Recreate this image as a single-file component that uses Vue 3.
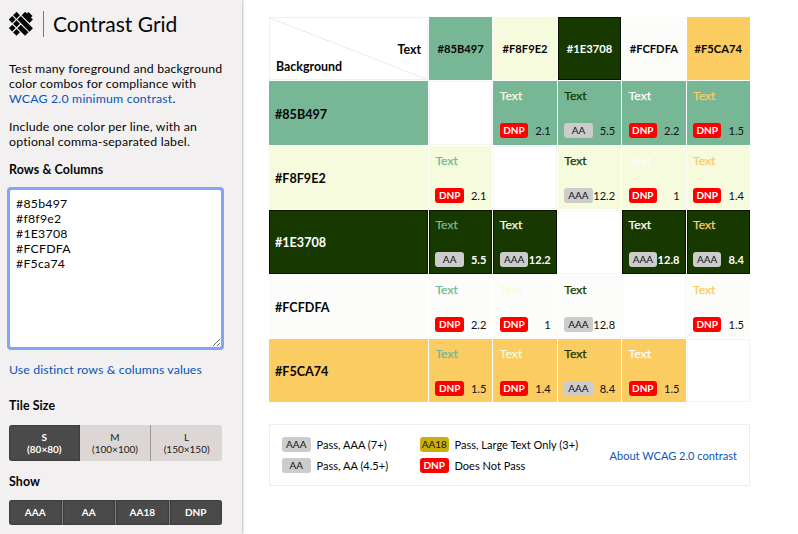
<script setup>
import { ref } from 'vue'

const source = ref('#85b497\n#f8f9e2\n#1E3708\n#FCFDFA\n#F5ca74')
const colors = [
  { name: '#85B497', cls: 'green' },
  { name: '#F8F9E2', cls: 'cream' },
  { name: '#1E3708', cls: 'forest' },
  { name: '#FCFDFA', cls: 'white' },
  { name: '#F5CA74', cls: 'yellow' },
]
const ratios = [
  [null, 2.1, 5.5, 2.2, 1.5],
  [2.1, null, 12.2, 1, 1.4],
  [5.5, 12.2, null, 12.8, 8.4],
  [2.2, 1, 12.8, null, 1.5],
  [1.5, 1.4, 8.4, 1.5, null],
]
const grade = (r) => (r >= 7 ? 'AAA' : r >= 4.5 ? 'AA' : r >= 3 ? 'AA18' : 'DNP')
const sizes = [['S', '80×80'], ['M', '100×100'], ['L', '150×150']]
const levels = ['AAA', 'AA', 'AA18', 'DNP']
const legend = [
  ['AAA', 'Pass, AAA (7+)'],
  ['AA18', 'Pass, Large Text Only (3+)'],
  ['AA', 'Pass, AA (4.5+)'],
  ['DNP', 'Does Not Pass'],
]
</script>

<template>
  <div class="app">
    <aside class="sidebar">
      <header class="brand">
        <svg class="logo" width="24" height="24" viewBox="0 0 24 24">
          <g fill="none" stroke="#050505" stroke-width="4.9">
            <path d="M5.8 1.5L9.2 4.9M1.5 5.8L4.9 9.2M5.8 10.1L9.2 13.5M1.5 14.4L4.9 17.8M5.8 18.7L9.2 22.1" />
            <path d="M14.4 1.5L22.2 9.3M10.1 5.8L22.2 17.9M10.1 14.4L17.8 22.1" />
          </g>
          <path d="M18.6 .9L22.6 4.9" stroke="#050505" stroke-width="2.6" />
        </svg>
        <h1>Contrast Grid</h1>
      </header>
      <p>Test many foreground and background<br />color combos for compliance with<br /><a>WCAG 2.0 minimum contrast</a>.</p>
      <p class="hint">Include one color per line, with an<br />optional comma-separated label.</p>
      <h2 class="rows-title">Rows &amp; Columns</h2>
      <textarea v-model="source" spellcheck="false"></textarea>
      <a class="distinct">Use distinct rows &amp; columns values</a>
      <h2 class="size-title">Tile Size</h2>
      <div class="segments sizes">
        <button v-for="([s, d], i) in sizes" :key="s" :class="{ active: i === 0 }">{{ s }}<br />({{ d }})</button>
      </div>
      <h2 class="show-title">Show</h2>
      <div class="segments levels">
        <button v-for="l in levels" :key="l" class="active">{{ l }}</button>
      </div>
    </aside>

    <main>
      <div class="grid">
        <div class="corner">
          <svg viewBox="0 0 159 63" preserveAspectRatio="none"><path d="M0 0L159 63" stroke="#eaeaea" fill="none" /></svg>
          <span class="axis-text">Text</span>
          <span class="axis-bg">Background</span>
        </div>
        <div v-for="c in colors" :key="c.name" class="column-key" :class="'bg-' + c.cls"><span>{{ c.name }}</span></div>
        <template v-for="(row, i) in colors" :key="row.name">
          <div class="row-key" :class="'bg-' + row.cls">{{ row.name }}</div>
          <template v-for="(col, j) in colors" :key="col.name">
            <div v-if="i === j" class="blank"></div>
            <div v-else class="tile" :class="'bg-' + row.cls">
              <span class="sample" :class="'fg-' + col.cls">Text</span>
              <div class="score">
                <span class="badge" :class="grade(ratios[i][j]).toLowerCase()">{{ grade(ratios[i][j]) }}</span>
                <span class="ratio">{{ ratios[i][j] }}</span>
              </div>
            </div>
          </template>
        </template>
      </div>

      <footer class="legend">
        <div class="entries">
          <div v-for="[g, t] in legend" :key="g" class="entry">
            <span class="badge" :class="g.toLowerCase()">{{ g }}</span><span>{{ t }}</span>
          </div>
        </div>
        <a>About WCAG 2.0 contrast</a>
      </footer>
    </main>
  </div>
</template>

<style>
body { overflow: hidden; background: #fff; }
</style>

<style scoped>
* { box-sizing: border-box; }
.app { display: flex; height: 534px; overflow: hidden; font: 12.3px/15px Lato, sans-serif; color: #050505; }
a { color: #0756b8; }
.sidebar { width: 242px; flex: none; padding: 11px 20px 0 9px; background: #f2f0f1; box-shadow: 0 0 3px #888; }
.brand { display: flex; align-items: center; height: 26px; }
.logo { flex: none; margin-left: 0; }
h1 { margin: 0 0 0 10px; padding-left: 9px; border-left: 1px solid #777; font-size: 21px; line-height: 26px; font-weight: 400; }
p { margin: 24px 0 0; letter-spacing: .19px; white-space: nowrap; }
.hint { margin-top: 13px; }
h2 { margin: 0; font-size: 12.4px; line-height: 15px; font-weight: 700; letter-spacing: .1px; }
.rows-title { margin-top: 13px; }
textarea { display: block; width: 213px; height: 159px; margin: 12px 0 0; padding: 6px 6px; border: 1px solid #737373; border-radius: 2px; outline: 3px solid #83a5f5; outline-offset: -1px; background: #fff; color: #050505; font: inherit; letter-spacing: .25px; resize: both; }
.distinct { display: block; margin-top: 14px; letter-spacing: .11px; white-space: nowrap; }
.size-title { margin-top: 21px; }
.segments { display: flex; width: 213px; border-radius: 3px; overflow: hidden; }
button { flex: 1; padding: 0; border: 0; border-left: 1px solid #999; background: #dcd6d5; color: #222; font: 10px/12px Lato, sans-serif; }
button:first-child { border-left: 0; }
.sizes { margin-top: 12px; height: 36px; }
.active { background: #4a4a4a; color: #fff; font-weight: 700; box-shadow: inset 0 0 2px #222; }
.sizes button { padding-bottom: 1px; }
.sizes button:nth-child(2) { border-left: 0; }
.show-title { margin-top: 13px; }
.levels { margin-top: 11px; height: 25px; }
.levels button + button { border-left-color: #7c7c7c; }
.levels button { padding-bottom: 1px; }
main { padding: 17px 0 0 27px; }
.grid { display: grid; width: 481px; grid-template-columns: 159px repeat(5, 63.4px); grid-template-rows: repeat(6, 63.4px); gap: 1px; }
.corner { position: relative; display: flex; flex-direction: column; border: 1px solid #f0f0f0; padding: 24px 6px 0 6px; font-size: 12.4px; font-weight: 700; }
.corner svg { position: absolute; inset: 0; width: 100%; height: 100%; }
.axis-text { align-self: flex-end; }
.axis-bg { margin-top: 2px; }
.column-key { display: flex; align-items: center; justify-content: center; font-size: 11.2px; font-weight: 700; }
.row-key { display: flex; align-items: center; padding: 2px 0 0 6px; font-weight: 700; font-size: 12.6px; }
.blank { border: 1px solid #f4f4f4; }
.tile { display: flex; flex-direction: column; justify-content: space-between; padding: 7px 6px 6.4px 6.4px; }
.sample { font-size: 12.2px; line-height: 15px; -webkit-text-stroke: .25px currentColor; }
.score { display: flex; align-items: center; justify-content: space-between; height: 15px; }
.badge { display: inline-flex; flex: none; align-items: center; justify-content: center; width: 28.5px; height: 15px; border-radius: 3px; background: #ccc; color: #111; font-size: 10px; line-height: 15px; }
.badge.dnp { background: #fe0000; color: #fff; font-weight: 700; }
.badge.aa18 { background: #cbb00b; }
.ratio { margin-left: -2px; font-size: 11.1px; color: #111; }
.bg-green { background: #78b796; }
.bg-cream { background: #f6fbdd; }
.bg-forest { background: #173900; color: #fff; box-shadow: inset 0 0 0 1px #071300; }
.bg-forest .ratio { color: #fff; font-weight: 700; }
.bg-white { background: #fcfdfb; }
.bg-yellow { background: #fbcc62; }
.fg-green { color: #78b796; }
.fg-cream { color: #f6fbdd; }
.fg-forest { color: #173900; }
.fg-white { color: #fcfdfb; }
.fg-yellow { color: #fbcc62; }
.legend { display: flex; align-items: center; justify-content: space-between; width: 481px; height: 62px; margin-top: 22px; padding: 0 12px; border: 1px solid #eee; font-size: 11.05px; }
.entries { display: grid; grid-template-columns: 138px auto; row-gap: 6px; }
.entry { display: flex; align-items: center; gap: 6px; height: 15px; white-space: nowrap; }
</style>
